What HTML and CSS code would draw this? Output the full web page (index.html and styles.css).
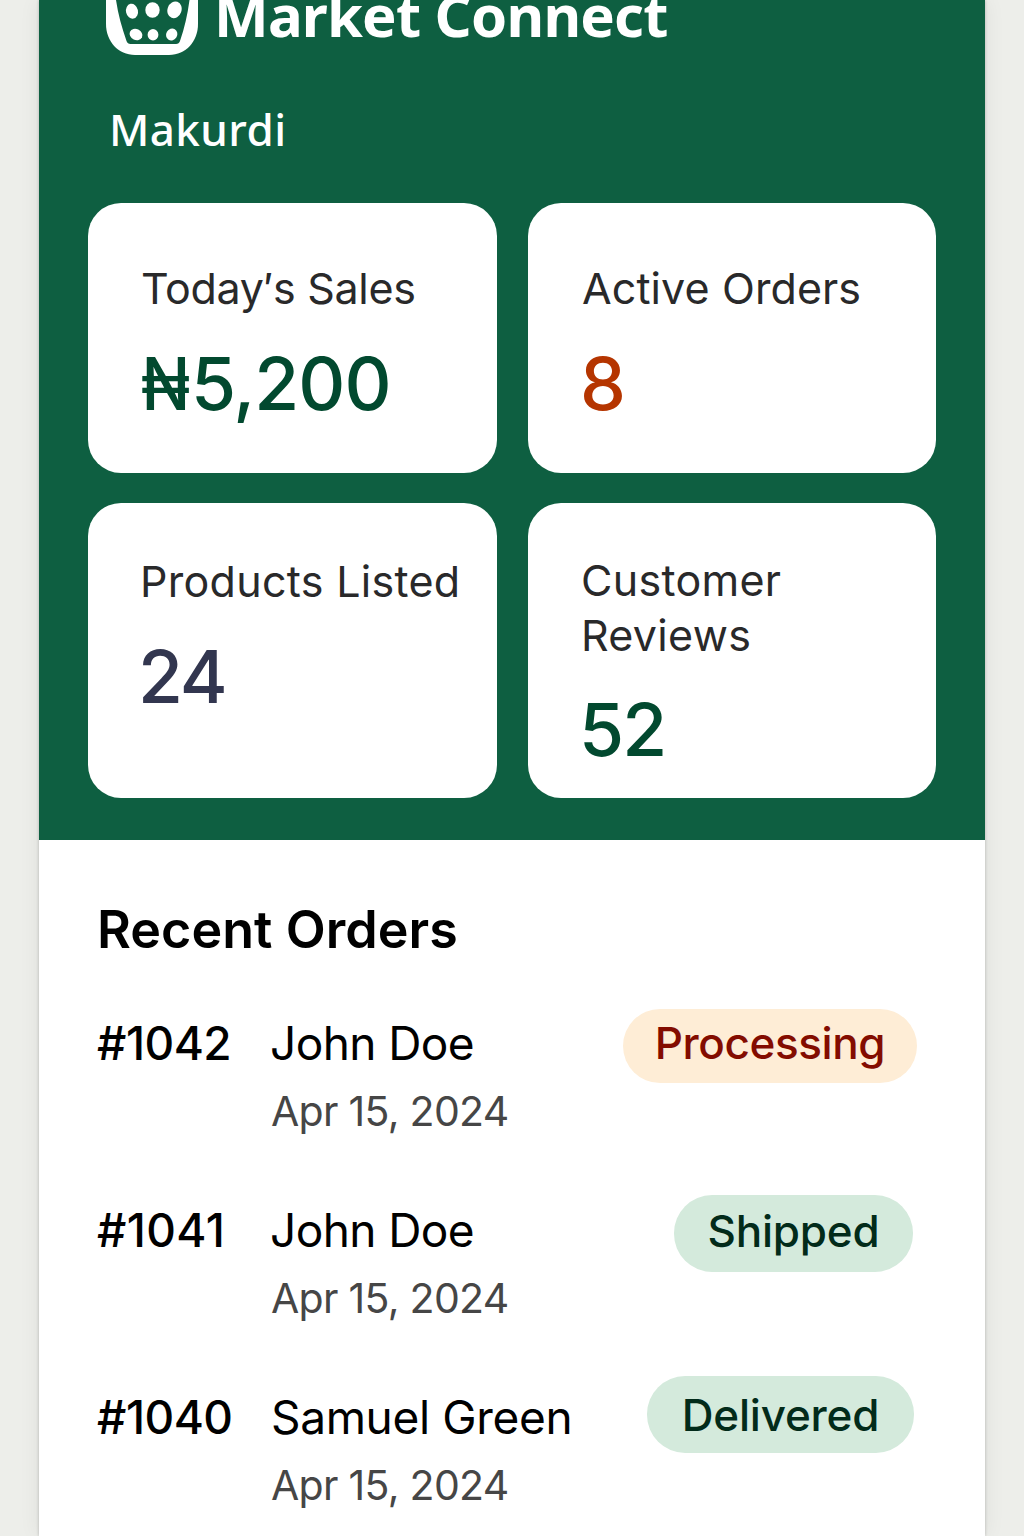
FILE: index.html
```html
<!DOCTYPE html>
<html lang="en">
<head>
<meta charset="utf-8">
<title>Market Connect</title>
<link rel="stylesheet" href="styles.css">
</head>
<body>
<main class="app">
  <header class="hero">
    <div class="brand">
      <svg class="brand-icon" viewBox="0 0 92 55" aria-hidden="true">
        <path fill="#fff" d="M0 0H92V24C92 41 80 55 63 55H29C12 55 0 41 0 24Z"/>
        <path fill="#0e5f41" d="M10 0H83.500C81.500 15 78.500 28 74 41Q73 44 70 44H24.500Q21.500 44 20.500 41C16 28 12 14 10 0Z"/>
        <g fill="#fff">
          <ellipse cx="26" cy="11.200" rx="6" ry="7.500" transform="rotate(-12 26 11.200)"/>
          <ellipse cx="46.500" cy="10" rx="7.200" ry="7.800"/>
          <ellipse cx="68.500" cy="9.800" rx="7" ry="8.500" transform="rotate(20 68.500 9.800)"/>
          <ellipse cx="30" cy="34.500" rx="6.600" ry="5.400" transform="rotate(25 30 34.500)"/>
          <ellipse cx="47" cy="34.700" rx="5.400" ry="5.700"/>
          <ellipse cx="65.700" cy="34.500" rx="5.500" ry="6.200" transform="rotate(30 65.700 34.500)"/>
        </g>
      </svg>
      <span class="brand-name">Market Connect</span>
    </div>
    <p class="place">Makurdi</p>
    <section class="stats">
      <article class="card card-sales">
        <h3 class="label">Today′s Sales</h3>
        <p class="value value-money"><span class="naira">₦</span>5,200</p>
      </article>
      <article class="card card-active">
        <h3 class="label">Active Orders</h3>
        <p class="value value-orange">8</p>
      </article>
      <article class="card card-products">
        <h3 class="label">Products Listed</h3>
        <p class="value value-navy">24</p>
      </article>
      <article class="card card-reviews">
        <h3 class="label">Customer Reviews</h3>
        <p class="value">52</p>
      </article>
    </section>
  </header>
  <section class="orders">
    <h2 class="orders-title">Recent Orders</h2>
    <ul class="order-list">
      <li class="order">
        <span class="order-id">#1042</span>
        <div class="order-info">
          <p class="order-name">John Doe</p>
          <p class="order-date">Apr 15, 2024</p>
        </div>
        <span class="badge badge-processing">Processing</span>
      </li>
      <li class="order">
        <span class="order-id order-id-loose">#1041</span>
        <div class="order-info">
          <p class="order-name">John Doe</p>
          <p class="order-date">Apr 15, 2024</p>
        </div>
        <span class="badge badge-shipped">Shipped</span>
      </li>
      <li class="order">
        <span class="order-id">#1040</span>
        <div class="order-info">
          <p class="order-name order-name-long">Samuel Green</p>
          <p class="order-date">Apr 15, 2024</p>
        </div>
        <span class="badge badge-delivered">Delivered</span>
      </li>
    </ul>
  </section>
</main>
</body>
</html>
```
FILE: styles.css
```css
* { box-sizing: border-box; margin: 0; padding: 0; }

body {
  height: 1536px;
  overflow: hidden;
  background: #edeeea;
  font-family: Inter, "Liberation Sans", sans-serif;
}

.app {
  width: 946px;
  height: 1536px;
  margin-left: 39px;
  background: #fff;
  box-shadow: 0 0 3px rgba(0, 0, 0, .22), 0 0 20px rgba(0, 0, 0, .07);
}

.hero {
  height: 840px;
  padding: 0 49px;
  background: #0e5f41;
  color: #fff;
}

.brand {
  display: flex;
  align-items: flex-end;
  gap: 16px;
  height: 55px;
  padding-left: 18px;
}
.brand-icon { width: 92px; height: 55px; flex: none; }
.brand-name {
  font: 700 58px/80px "Noto Sans", sans-serif;
  letter-spacing: -.8px;
  white-space: nowrap;
}
.place {
  margin: 49px 0 49px;
  padding-left: 21px;
  font: 500 44px/50px "Noto Sans", sans-serif;
  letter-spacing: .4px;
}

.stats {
  display: grid;
  grid-template-columns: 409px 408px;
  grid-template-rows: 270px 295px;
  gap: 30px 31px;
}
.card {
  padding: 58px 30px 0 53px;
  border-radius: 33px;
  background: #fff;
}
.card-products { padding: 51px 20px 0 52px; }
.card-reviews { padding-top: 50px; }

.label {
  color: #29292a;
  font-size: 43px;
  font-weight: 430;
  line-height: 55px;
}
.card-sales .label { letter-spacing: -.3px; white-space: nowrap; }
.card-active .label { padding-left: 1px; letter-spacing: .1px; }
.card-products .label { letter-spacing: .3px; white-space: nowrap; }
.card-reviews .label { letter-spacing: .3px; }

.value {
  margin-top: 28px;
  color: #02492f;
  font-size: 73px;
  font-weight: 550;
  line-height: 80px;
  letter-spacing: -2px;
}
.card-reviews .value { margin: 27px 0 0 -2px; }
.value-money { letter-spacing: -1px; }
.naira {
  display: inline-block;
  margin-right: -5px;
  transform: scaleX(.88);
  transform-origin: left;
}
.value-orange { margin-left: -1px; color: #b53500; }
.value-navy { margin-left: -2px; color: #32364f; font-weight: 500; }

.orders { padding: 58px 68px 0 56px; color: #000; }
.orders-title {
  padding-left: 2px;
  font-size: 52px;
  font-weight: 600;
  line-height: 64px;
  letter-spacing: .05px;
}
.order-list { margin-top: 53px; list-style: none; }
.order {
  display: grid;
  grid-template-columns: 175px 1fr auto;
  align-items: start;
  height: 187px;
}
.order-id {
  padding-left: 2px;
  font-size: 46px;
  font-weight: 500;
  line-height: 56px;
  letter-spacing: -.5px;
}
.order-id-loose { letter-spacing: .4px; }
.order-name { font-size: 46px; line-height: 56px; letter-spacing: -.6px; }
.order-name-long { padding-left: 1px; letter-spacing: -.35px; white-space: nowrap; }
.order-date {
  margin-top: 15px;
  padding-left: 1px;
  color: #464646;
  font-size: 41px;
  line-height: 50px;
  letter-spacing: -.7px;
}

.badge {
  border-radius: 38px;
  font-size: 44px;
  font-weight: 500;
  text-align: center;
}
.badge-processing {
  width: 294px;
  height: 74px;
  margin-top: -6px;
  background: #feedd6;
  color: #830c00;
  line-height: 69px;
  letter-spacing: -.4px;
}
.badge-shipped {
  width: 239px;
  height: 77px;
  margin: -7px 4px 0 0;
  background: #d4eadc;
  color: #022b1a;
  line-height: 73px;
  letter-spacing: -.2px;
}
.badge-delivered {
  width: 267px;
  height: 77px;
  margin: -13px 3px 0 0;
  background: #d4eadc;
  color: #022b1a;
  line-height: 79px;
  letter-spacing: -.2px;
}
```
